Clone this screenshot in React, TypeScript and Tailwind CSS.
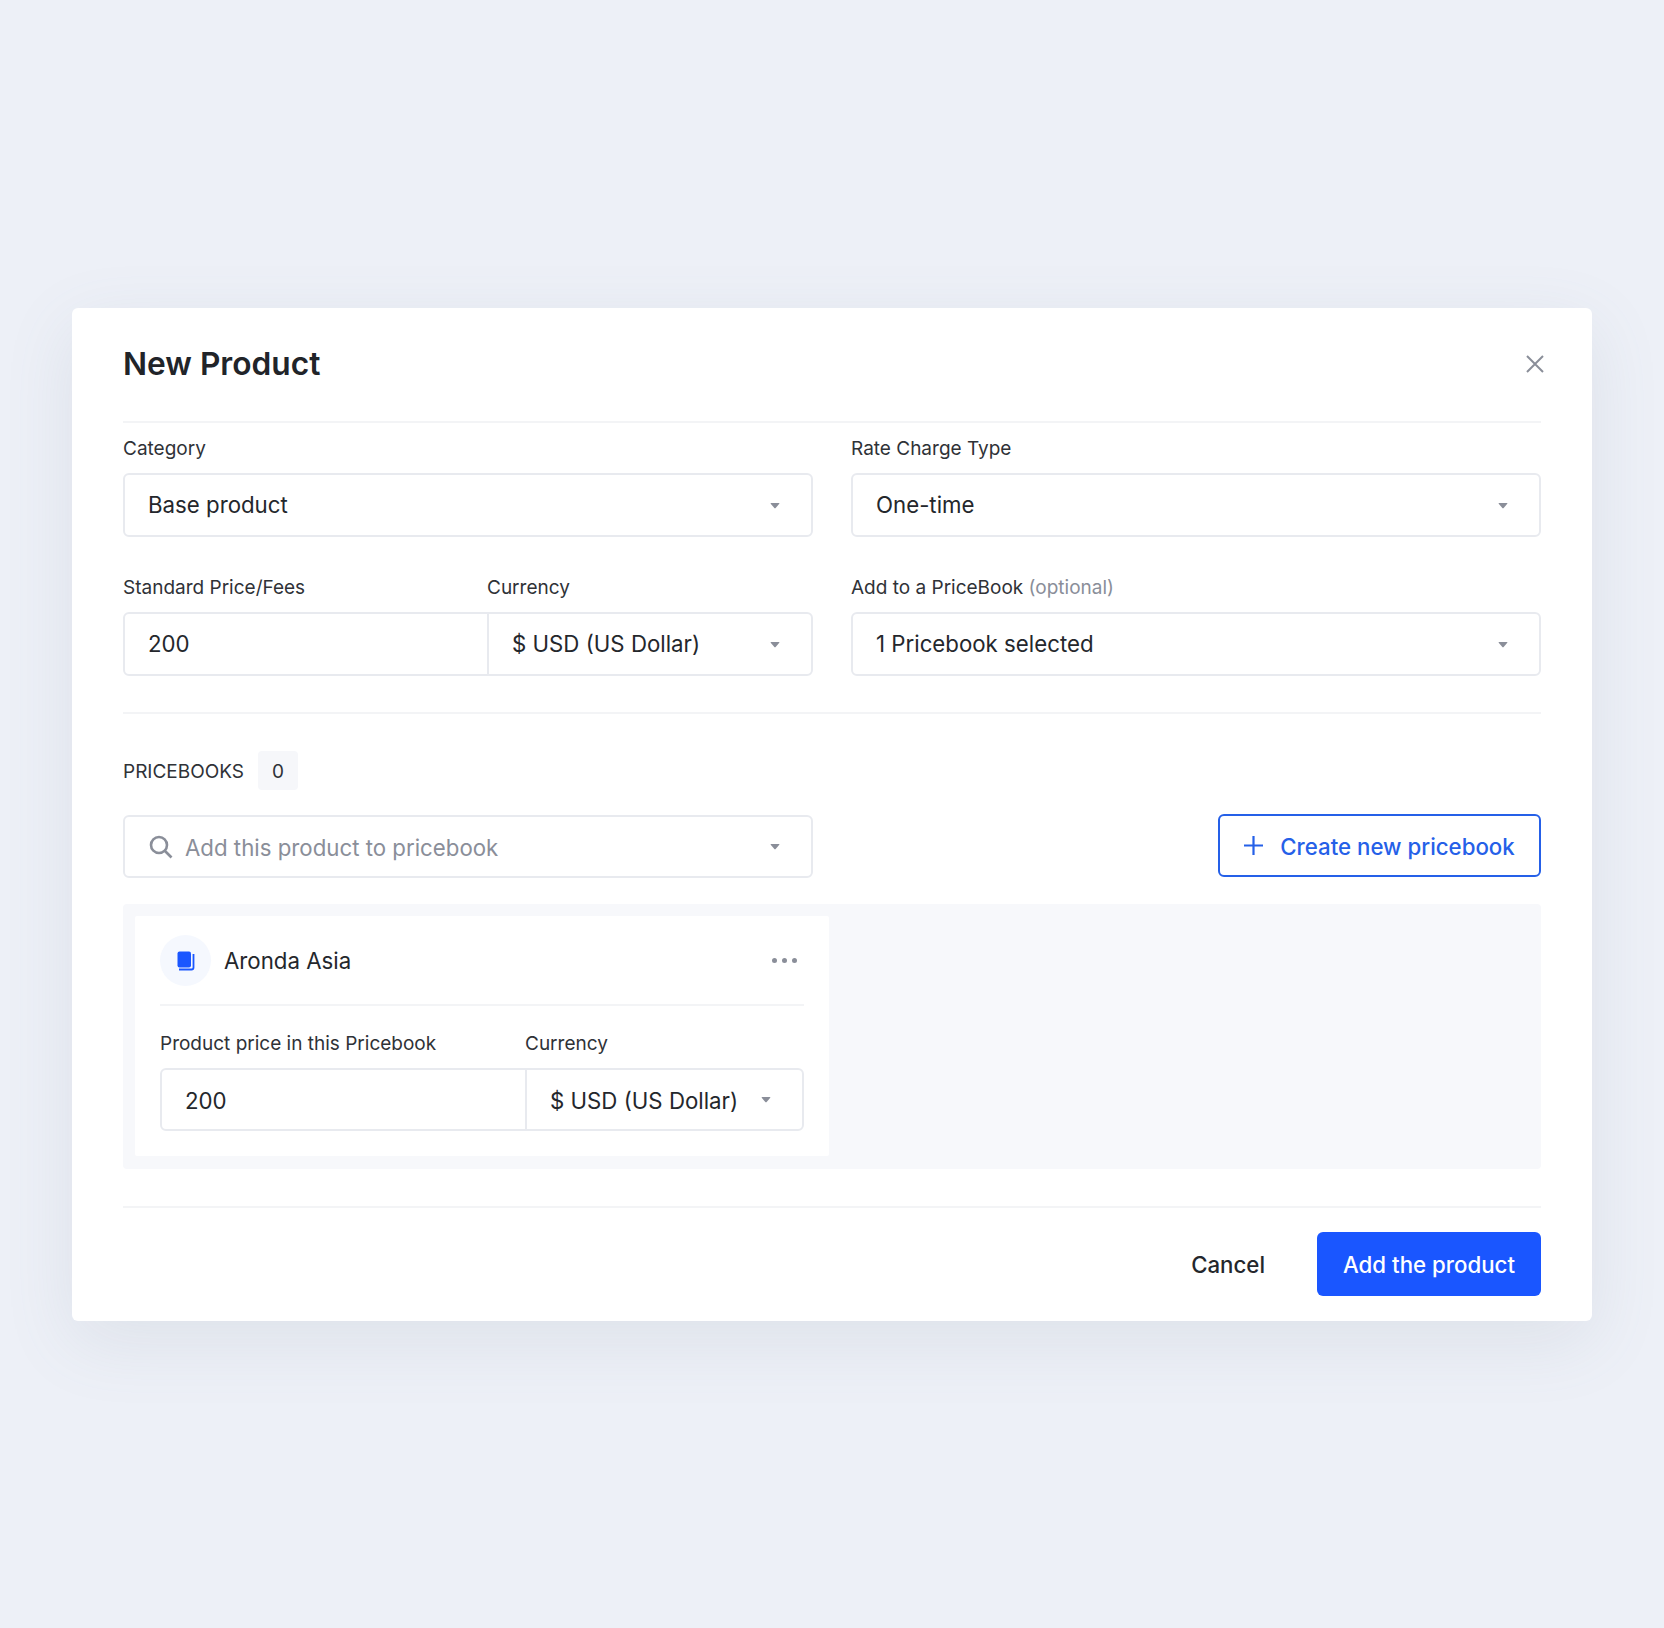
const inter = { fontFamily: 'Inter, "Liberation Sans", sans-serif' };

function Caret({ className = '' }: { className?: string }) {
  return (
    <svg width="10" height="7" viewBox="0 0 11 8" className={`shrink-0 ${className}`}>
      <path d="M1.2 1h8.6c.6 0 .9.6.6 1.1L6 7c-.3.3-.7.3-1 0L.6 2.1C.3 1.6.6 1 1.2 1z" fill="#8a8e99" />
    </svg>
  );
}

function Label({ children }: { children: React.ReactNode }) {
  return <div className="h-[24px] mb-[12px] text-[19px] leading-[24px] text-[#2f3237] whitespace-nowrap">{children}</div>;
}

function SelectBox({ value }: { value: string }) {
  return (
    <div className="h-[64px] flex items-center justify-between rounded-[6px] border-2 border-[#e8eaef] pl-[23px] pr-[31px] bg-white">
      <span className="text-[22.25px] text-[#24272c]">{value}</span>
      <Caret />
    </div>
  );
}

function PriceInput({ label, split, height, textPad }: { label: string; split: string; height: string; textPad: string }) {
  return (
    <div>
      <div className="flex">
        <div className={split}><Label>{label}</Label></div>
        <Label>Currency</Label>
      </div>
      <div className={`${height} flex rounded-[6px] border-2 border-[#e8eaef] bg-white`}>
        <div className={`${split} pl-[23px] flex items-center border-r-2 border-[#e8eaef] text-[22.25px] text-[#24272c]`}>
          <span className={textPad}>200</span>
        </div>
        <div className="flex-1 flex items-center justify-between pl-[23px] pr-[31px]">
          <span className={`${textPad} text-[22.25px] text-[#24272c] whitespace-nowrap`}>$ USD (US Dollar)</span>
          <Caret />
        </div>
      </div>
    </div>
  );
}

function Divider() {
  return <div className="h-[2px] bg-[#f3f4f6]" />;
}

export default function App() {
  return (
    <div style={inter} className="min-h-[1628px] bg-[#edf0f7] px-[72px] pt-[308px]">
      <div className="h-[1013px] rounded-[6px] bg-white px-[51px] shadow-[0_20px_70px_rgba(110,120,140,0.12)]">
        <div className="h-[113px] pb-[2px] flex items-center justify-between">
          <h1 className="text-[31.7px] font-semibold text-[#212429]">New Product</h1>
          <svg width="18" height="18" viewBox="0 0 18 18" className="-mr-[3px]" fill="none" stroke="#8a8e99" strokeWidth="2">
            <path d="M1 1l16 16M17 1L1 17" />
          </svg>
        </div>
        <Divider />

        <div className="grid grid-cols-2 gap-x-[38px] gap-y-[39px] pt-[14px]">
          <div>
            <Label>Category</Label>
            <SelectBox value="Base product" />
          </div>
          <div>
            <Label>Rate Charge Type</Label>
            <SelectBox value="One-time" />
          </div>
          <PriceInput label="Standard Price/Fees" split="w-[364px]" height="h-[64px]" textPad="pt-0" />
          <div>
            <Label>Add to a PriceBook <span className="text-[#8a8e99]">(optional)</span></Label>
            <SelectBox value="1 Pricebook selected" />
          </div>
        </div>

        <div className="mt-[36px]"><Divider /></div>

        <div className="mt-[37px] flex items-center gap-[14px]">
          <span className="pt-[3px] text-[19px] text-[#2f3237]">PRICEBOOKS</span>
          <span className="w-[40px] h-[39px] pt-[3px] rounded-[4px] bg-[#f6f7fa] flex items-center justify-center text-[19px] text-[#2f3237]">0</span>
        </div>

        <div className="mt-[24px] flex items-center justify-between">
          <div className="w-[690px] h-[63px] flex items-center rounded-[6px] border-2 border-[#e8eaef] pl-[24px] pr-[31px]">
            <svg width="24" height="24" viewBox="0 0 24 24" fill="none" stroke="#8a8e99" strokeWidth="2.6" className="shrink-0">
              <circle cx="10" cy="10" r="8" />
              <path d="M16 16l6.5 6.5" />
            </svg>
            <span className="ml-[12px] pt-[2px] flex-1 text-[22.25px] text-[#8a8e99]">Add this product to pricebook</span>
            <Caret />
          </div>
          <button className="mb-[2px] h-[63px] w-[323px] flex items-center justify-center gap-[17px] rounded-[6px] border-2 border-[#2560e8] text-[22.25px] font-medium text-[#2560e8]">
            <svg width="19" height="19" viewBox="0 0 19 19" fill="none" stroke="#2560e8" strokeWidth="2.2">
              <path d="M9.5 0v19M0 9.5h19" />
            </svg>
            <span className="pt-[2px]">Create new pricebook</span>
          </button>
        </div>

        <div className="mt-[25px] h-[265px] rounded-[4px] bg-[#f7f8fb] p-[12px]">
          <div className="w-[694px] h-[240px] rounded-[2px] bg-white px-[25px]">
            <div className="h-[88px] pt-[1px] flex items-center justify-between">
              <div className="flex items-center gap-[13px]">
                <div className="w-[51px] h-[51px] rounded-full bg-[#f5f8fe] flex items-center justify-center">
                  <svg width="18" height="20" viewBox="0 0 18 20">
                    <rect x="0.5" y="0.5" width="13.5" height="16" rx="2" fill="#1a56ff" />
                    <path d="M16.5 3v13.5a2 2 0 0 1-2 2H2" fill="none" stroke="#1a56ff" strokeWidth="1.8" />
                  </svg>
                </div>
                <span className="pt-[1px] text-[22.25px] text-[#24272c]">Aronda Asia</span>
              </div>
              <div className="flex gap-[5px] pr-[7px]">
                <span className="w-[5px] h-[5px] rounded-full bg-[#8a8e99]" />
                <span className="w-[5px] h-[5px] rounded-full bg-[#8a8e99]" />
                <span className="w-[5px] h-[5px] rounded-full bg-[#8a8e99]" />
              </div>
            </div>
            <Divider />
            <div className="pt-[26px]">
              <PriceInput label="Product price in this Pricebook" split="w-[365px]" height="h-[63px]" textPad="pt-[2px]" />
            </div>
          </div>
        </div>

        <div className="mt-[37px]"><Divider /></div>

        <div className="mt-[24px] flex items-center justify-end gap-[52px]">
          <span className="pt-[2px] text-[22.25px] font-medium text-[#24272c]">Cancel</span>
          <button className="h-[64px] w-[224px] pt-[2px] rounded-[6px] bg-[#1a56ff] text-[22.25px] font-medium text-white">Add the product</button>
        </div>
      </div>
    </div>
  );
}
